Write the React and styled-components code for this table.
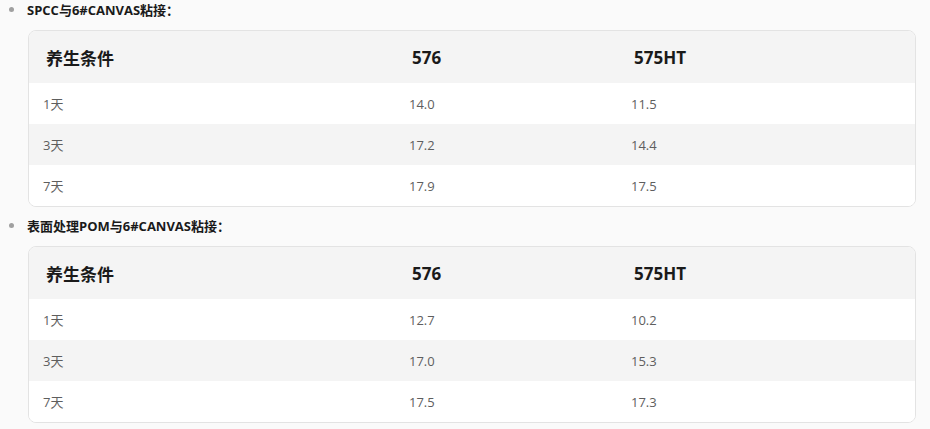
import React from 'react';
import styled, { createGlobalStyle } from 'styled-components';

const GlobalStyle = createGlobalStyle`
  body {
    margin: 0;
    background: #fafafa;
    font-family: "Open Sans", "Noto Sans CJK SC", sans-serif;
  }
`;

const List = styled.ul`
  list-style: none;
  margin: 0;
  padding: 0 14px 0 28px;
`;

const Item = styled.li`
  margin-bottom: 9px;
`;

const ItemTitle = styled.div`
  position: relative;
  height: 20px;
  line-height: 20px;
  margin-left: -1px;
  font-size: 13px;
  font-weight: 700;
  color: #1a1a1a;
  margin-bottom: 10px;

  &::before {
    content: "";
    position: absolute;
    left: -18px;
    top: 7px;
    width: 5px;
    height: 5px;
    border-radius: 50%;
    background: #a0a0a0;
  }
`;

const Card = styled.div`
  border: 1px solid #e3e3e3;
  border-radius: 8px;
  overflow: hidden;
  background: #fff;
`;

const Table = styled.table`
  width: 100%;
  border-collapse: collapse;
  table-layout: fixed;
`;

const HeadCell = styled.th`
  height: 52px;
  padding: 0 0 0 17px;
  text-align: left;
  font-size: 17px;
  font-weight: 700;
  color: #1a1a1a;
  background: #f4f4f4;
`;

const Row = styled.tr`
  background: ${p => (p.$shaded ? '#f4f4f4' : '#fff')};
`;

const Cell = styled.td`
  height: 41px;
  padding: 0 0 0 14px;
  font-size: 13px;
  color: #5e5e5e;
`;

const sections = [
  {
    title: 'SPCC与6#CANVAS粘接：',
    rows: [
      ['1天', '14.0', '11.5'],
      ['3天', '17.2', '14.4'],
      ['7天', '17.9', '17.5'],
    ],
  },
  {
    title: '表面处理POM与6#CANVAS粘接：',
    rows: [
      ['1天', '12.7', '10.2'],
      ['3天', '17.0', '15.3'],
      ['7天', '17.5', '17.3'],
    ],
  },
];

const App = () => (
  <>
    <GlobalStyle />
    <List>
      {sections.map(s => (
        <Item key={s.title}>
          <ItemTitle>{s.title}</ItemTitle>
          <Card>
            <Table>
              <colgroup>
                <col style={{ width: 366 }} />
                <col style={{ width: 222 }} />
                <col />
              </colgroup>
              <thead>
                <tr>
                  <HeadCell>养生条件</HeadCell>
                  <HeadCell>576</HeadCell>
                  <HeadCell>575HT</HeadCell>
                </tr>
              </thead>
              <tbody>
                {s.rows.map((r, i) => (
                  <Row key={r[0]} $shaded={i === 1}>
                    {r.map((c, j) => (
                      <Cell key={j}>{c}</Cell>
                    ))}
                  </Row>
                ))}
              </tbody>
            </Table>
          </Card>
        </Item>
      ))}
    </List>
  </>
);

export default App;
